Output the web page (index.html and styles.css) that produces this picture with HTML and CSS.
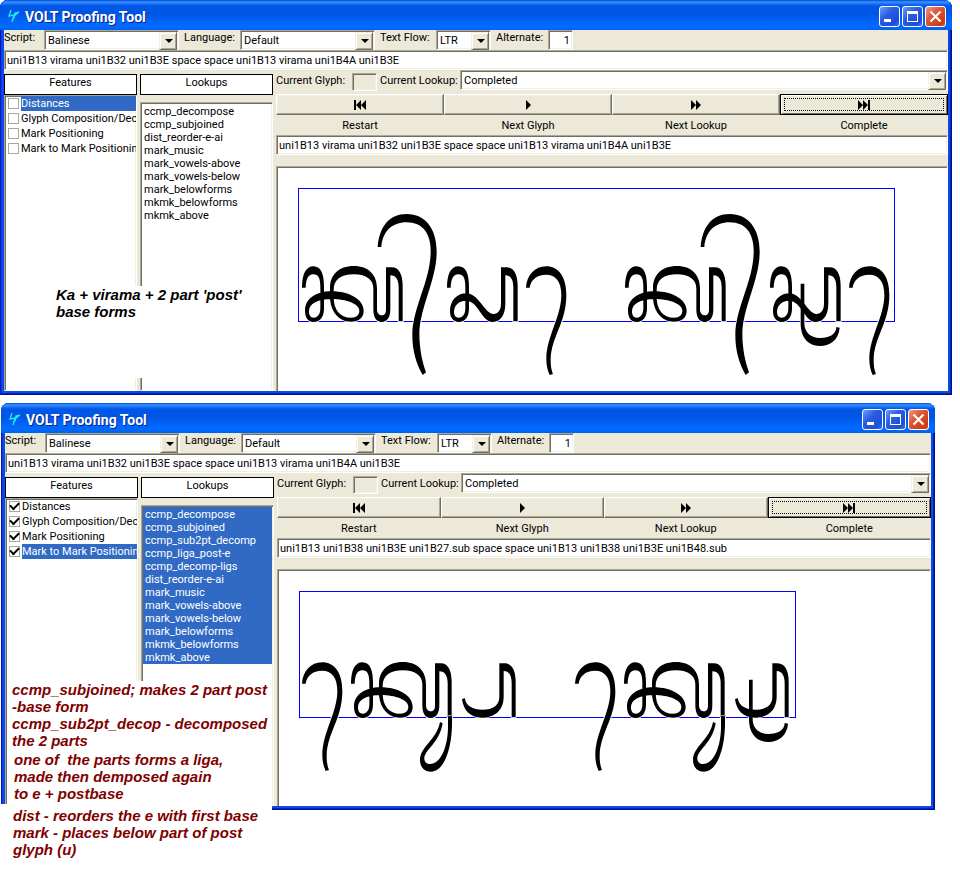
FILE: index.html
```html
<!DOCTYPE html>
<html lang="en">
<head>
<meta charset="utf-8">
<title>VOLT Proofing Tool</title>
<link rel="stylesheet" href="styles.css">
</head>
<body>
<svg class="defs" aria-hidden="true">
  <defs>
    <g id="ka"><path d="M36,323 C36,282 48,259 70,259 C94,259 102,284 102,322 L102,385 C102,410 91,426 71,426 C54,426 45,412 45,392 C45,358 75,334 125,334 C180,334 221,360 221,392 C221,412 207,425 183,425 C145,425 120,392 120,350 L120,325 C120,285 145,258 192,258 C236,258 261,285 261,325 L261,388 C261,400 268,406 276,406 C285,406 288,399 288,388 L288,262 L305,262 C328,262 338,285 338,318 L338,424 L326,424 L326,322 C326,300 318,286 301,286 L301,388 C301,412 292,426 275,426 C258,426 250,412 250,388 L250,325 C250,300 230,283 192,283 C152,283 131,300 131,330 L131,350 C131,390 150,413 183,413 C200,413 208,404 208,392 C208,372 170,357 125,357 C80,357 57,372 57,394 C57,406 62,413 71,413 C84,413 91,402 91,385 L91,322 C91,295 86,283 70,283 C54,283 48,298 47,323 Z"/></g>
    <g id="virama"><path d="M263,201 C268,140 298,102 350,102 C405,102 440,145 440,215 C440,300 390,380 388,460 C388,510 398,550 408,577 L398,585 C378,550 367,510 367,465 C367,385 422,300 422,215 C422,160 398,127 350,127 C305,127 278,155 274,201 Z"/></g>
    <g id="ma"><path d="M471,323 C471,282 483,259 505,259 C529,259 537,284 537,322 L537,385 C537,410 526,426 506,426 C489,426 480,412 480,394 C480,362 500,340 530,340 C565,340 585,402 610,402 C625,402 633,390 633,370 L633,262 L650,262 C673,262 683,285 683,318 L683,424 L670,424 L670,322 C670,300 663,286 646,286 L646,370 C646,405 632,426 608,426 C575,426 565,362 528,362 C505,362 492,378 492,396 C492,407 497,413 506,413 C519,413 526,402 526,385 L526,322 C526,295 521,283 505,283 C489,283 483,298 482,323 Z"/></g>
    <g id="hook"><path d="M708,323 C710,285 735,259 768,259 C806,259 829,290 829,345 C829,430 783,470 782,540 C782,560 785,572 789,582 L779,585 C772,570 769,555 769,538 C769,470 814,410 814,345 C814,305 798,284 768,284 C740,284 722,300 719,323 Z"/></g>
    <g id="below"><path d="M602,311 L613,311 L613,430 C613,455 630,474 660,474 C690,474 708,462 709,441 L719,443 C716,478 692,498 660,498 C622,498 602,470 602,430 Z"/></g>
    <g id="tail"><path d="M474,408 L486,408 L486,430 C486,500 465,575 422,575 C402,575 390,560 390,540 C390,500 440,480 450,426 L458,430 C448,490 403,510 403,535 C403,547 410,552 420,552 C452,552 474,500 474,440 Z"/></g>
    <g id="post"><path d="M516,358 L524,354 C528,378 548,389 577,389 C610,389 628,375 628,350 L628,250 L643,250 C668,250 677,275 677,305 L677,411 L665,411 L665,310 C665,288 658,273 641,273 L641,350 C641,390 615,413 575,413 C540,413 520,390 516,358 Z"/></g>
    <g id="line-one">
      <use href="#ka"/><use href="#virama"/><use href="#ma"/><use href="#hook"/>
      <use href="#ka" x="969"/><use href="#virama" x="969"/><use href="#ma" x="969"/><use href="#below" x="930"/><use href="#hook" x="969"/>
    </g>
    <g id="line-two">
      <use href="#hook" x="-672" y="-12"/><use href="#ka" x="147" y="-12"/><use href="#tail"/><use href="#post"/>
      <use href="#hook" x="147" y="-12"/><use href="#ka" x="966" y="-12"/><use href="#tail" x="819"/><use href="#post" x="819"/><use href="#below" x="775" y="-12"/>
    </g>
    <g id="bolt"><path d="M5 1 3 7 8 6 6 13M13 3 8 7 6 13M13 3 9 4 8 9" fill="none" stroke="#1fe6f5" stroke-width="1.4"/></g>
    <g id="i-restart"><path d="M0 0h2v10h-2zM7 0v10l-5-5zM12 0v10l-5-5z"/></g>
    <g id="i-next"><path d="M4 0l5 5-5 5z"/></g>
    <g id="i-forward"><path d="M1 0l5 5-5 5zM6 0l5 5-5 5z"/></g>
    <g id="i-complete"><path d="M0 0l5 5-5 5zM5 0l5 5-5 5zM10 0h2v10h-2z"/></g>
  </defs>
</svg>

<main class="page">
  <section class="shot shot-first">
    <div class="window">
      <header class="titlebar">
        <svg class="app-icon" viewBox="0 0 16 16"><use href="#bolt"/></svg>
        <h1 class="title">VOLT Proofing Tool</h1>
        <button class="sys" aria-label="Minimize"><svg viewBox="0 0 19 19"><path d="M4 12h7v3h-7z"/></svg></button>
        <button class="sys" aria-label="Maximize"><svg viewBox="0 0 19 19"><path fill-rule="evenodd" d="M4 4h11v11h-11zM5 7v7h9v-7z"/></svg></button>
        <button class="sys close" aria-label="Close"><svg viewBox="0 0 19 19"><path d="M4.500 4.500l10 10M14.500 4.500l-10 10" stroke="#fff" stroke-width="2.200"/></svg></button>
      </header>
      <div class="client">
        <div class="toolbar">
          <label class="lab-script" for="script1">Script:</label>
          <span class="combo wide"><select id="script1"><option>Balinese</option></select></span>
          <label class="lab" for="lang1">Language:</label>
          <span class="combo wide"><select id="lang1"><option>Default</option></select></span>
          <label class="lab" for="flow1">Text Flow:</label>
          <span class="combo narrow"><select id="flow1"><option>LTR</option></select></span>
          <label class="lab-alt" for="alt1">Alternate:</label>
          <input class="field alt" id="alt1" type="text" value="1">
        </div>
        <input class="field" type="text" aria-label="Input glyphs" value="uni1B13 virama uni1B32 uni1B3E space space uni1B13 virama uni1B4A uni1B3E">
        <div class="columns">
          <section class="side">
            <h2 class="head">Features</h2>
            <div class="list features">
              <label class="check"><input type="checkbox"><span class="sel">Distances</span></label>
              <label class="check"><input type="checkbox"><span>Glyph Composition/Dec</span></label>
              <label class="check"><input type="checkbox"><span>Mark Positioning</span></label>
              <label class="check"><input type="checkbox"><span>Mark to Mark Positioning</span></label>
            </div>
          </section>
          <section class="side">
            <h2 class="head">Lookups</h2>
            <ul class="list lookups">
              <li>ccmp_decompose</li><li>ccmp_subjoined</li><li>dist_reorder-e-ai</li><li>mark_music</li><li>mark_vowels-above</li><li>mark_vowels-below</li><li>mark_belowforms</li><li>mkmk_belowforms</li><li>mkmk_above</li>
            </ul>
          </section>
          <section class="work">
            <div class="current">
              <label class="lab-glyph" for="glyph1">Current Glyph:</label>
              <input class="field glyph" id="glyph1" type="text" readonly>
              <label class="lab-lookup" for="lookup1">Current Lookup:</label>
              <span class="combo fill"><select id="lookup1"><option>Completed</option></select></span>
            </div>
            <div class="steps">
              <div class="step"><button class="push" aria-labelledby="r1"><svg viewBox="0 0 12 10"><use href="#i-restart"/></svg></button><span id="r1">Restart</span></div>
              <div class="step"><button class="push" aria-labelledby="n1"><svg viewBox="0 0 12 10"><use href="#i-next"/></svg></button><span id="n1">Next Glyph</span></div>
              <div class="step"><button class="push" aria-labelledby="l1"><svg viewBox="0 0 12 10"><use href="#i-forward"/></svg></button><span id="l1">Next Lookup</span></div>
              <div class="step"><button class="push default" aria-labelledby="c1"><svg viewBox="0 0 12 10"><use href="#i-complete"/></svg></button><span id="c1">Complete</span></div>
            </div>
            <input class="field" type="text" aria-label="Output glyphs" value="uni1B13 virama uni1B32 uni1B3E space space uni1B13 virama uni1B4A uni1B3E">
            <div class="canvas">
              <svg class="proof" viewBox="0 0 1845 615" role="img" aria-label="Balinese proof">
                <rect class="frame" x="25" y="25" width="1788" height="399"/>
                <use class="halo" href="#line-one"/>
                <use href="#line-one"/>
              </svg>
            </div>
          </section>
        </div>
      </div>
    </div>
    <p class="note note-black">Ka + virama + 2 part 'post'<br>base forms</p>
  </section>

  <section class="shot shot-second">
    <div class="window">
      <header class="titlebar">
        <svg class="app-icon" viewBox="0 0 16 16"><use href="#bolt"/></svg>
        <h1 class="title">VOLT Proofing Tool</h1>
        <button class="sys" aria-label="Minimize"><svg viewBox="0 0 19 19"><path d="M4 12h7v3h-7z"/></svg></button>
        <button class="sys" aria-label="Maximize"><svg viewBox="0 0 19 19"><path fill-rule="evenodd" d="M4 4h11v11h-11zM5 7v7h9v-7z"/></svg></button>
        <button class="sys close" aria-label="Close"><svg viewBox="0 0 19 19"><path d="M4.500 4.500l10 10M14.500 4.500l-10 10" stroke="#fff" stroke-width="2.200"/></svg></button>
      </header>
      <div class="client">
        <div class="toolbar">
          <label class="lab-script" for="script2">Script:</label>
          <span class="combo wide"><select id="script2"><option>Balinese</option></select></span>
          <label class="lab" for="lang2">Language:</label>
          <span class="combo wide"><select id="lang2"><option>Default</option></select></span>
          <label class="lab" for="flow2">Text Flow:</label>
          <span class="combo narrow"><select id="flow2"><option>LTR</option></select></span>
          <label class="lab-alt" for="alt2">Alternate:</label>
          <input class="field alt" id="alt2" type="text" value="1">
        </div>
        <input class="field" type="text" aria-label="Input glyphs" value="uni1B13 virama uni1B32 uni1B3E space space uni1B13 virama uni1B4A uni1B3E">
        <div class="columns">
          <section class="side">
            <h2 class="head">Features</h2>
            <div class="list features">
              <label class="check"><input type="checkbox" checked><span>Distances</span></label>
              <label class="check"><input type="checkbox" checked><span>Glyph Composition/Dec</span></label>
              <label class="check"><input type="checkbox" checked><span>Mark Positioning</span></label>
              <label class="check"><input type="checkbox" checked><span class="sel">Mark to Mark Positioning</span></label>
            </div>
          </section>
          <section class="side">
            <h2 class="head">Lookups</h2>
            <ul class="list lookups all">
              <li>ccmp_decompose</li><li>ccmp_subjoined</li><li>ccmp_sub2pt_decomp</li><li>ccmp_liga_post-e</li><li>ccmp_decomp-ligs</li><li>dist_reorder-e-ai</li><li>mark_music</li><li>mark_vowels-above</li><li>mark_vowels-below</li><li>mark_belowforms</li><li>mkmk_belowforms</li><li>mkmk_above</li>
            </ul>
          </section>
          <section class="work">
            <div class="current">
              <label class="lab-glyph" for="glyph2">Current Glyph:</label>
              <input class="field glyph" id="glyph2" type="text" readonly>
              <label class="lab-lookup" for="lookup2">Current Lookup:</label>
              <span class="combo fill"><select id="lookup2"><option>Completed</option></select></span>
            </div>
            <div class="steps">
              <div class="step"><button class="push" aria-labelledby="r2"><svg viewBox="0 0 12 10"><use href="#i-restart"/></svg></button><span id="r2">Restart</span></div>
              <div class="step"><button class="push" aria-labelledby="n2"><svg viewBox="0 0 12 10"><use href="#i-next"/></svg></button><span id="n2">Next Glyph</span></div>
              <div class="step"><button class="push" aria-labelledby="l2"><svg viewBox="0 0 12 10"><use href="#i-forward"/></svg></button><span id="l2">Next Lookup</span></div>
              <div class="step"><button class="push default" aria-labelledby="c2"><svg viewBox="0 0 12 10"><use href="#i-complete"/></svg></button><span id="c2">Complete</span></div>
            </div>
            <input class="field" type="text" aria-label="Output glyphs" value="uni1B13 uni1B38 uni1B3E uni1B27.sub space space uni1B13 uni1B38 uni1B3E uni1B48.sub">
            <div class="canvas tall">
              <svg class="proof" viewBox="3 9 1845 615" role="img" aria-label="Balinese proof">
                <rect class="frame" x="29" y="34" width="1488" height="378"/>
                <use class="halo" href="#line-two"/>
                <use href="#line-two"/>
                <path class="seam" d="M472,407h17M1291,407h17"/>
              </svg>
            </div>
          </section>
        </div>
      </div>
    </div>
    <div class="note note-red note-upper">
      <p>ccmp_subjoined; makes 2 part post<br>-base form<br>ccmp_sub2pt_decop - decomposed<br>the 2 parts</p>
      <p>one of&nbsp; the parts forms a liga,<br>made then demposed again<br>to e + postbase</p>
    </div>
    <p class="note note-red note-lower">dist - reorders the e with first base<br>mark - places below part of post<br>glyph (u)</p>
  </section>
</main>
</body>
</html>
```
FILE: styles.css
```css
* { box-sizing: border-box; }

body {
  margin: 0;
  background: #fff;
  color: #000;
  font: 11px/13px Roboto, "Liberation Sans", sans-serif;
}

h1, h2, p, ul { margin: 0; padding: 0; list-style: none; }

input, select, button {
  margin: 0;
  font: inherit;
  color: inherit;
  border-radius: 0;
  appearance: none;
}

.defs { position: absolute; width: 0; height: 0; }

.page {
  display: flex;
  flex-direction: column;
  gap: 8px;
  padding-bottom: 63px;
}

.shot { position: relative; }
.shot-first { margin-right: 8px; }
.shot-second { margin: 0 25px 0 1px; }

.window {
  padding: 0 4px 4px;
  border-radius: 8px 8px 0 0;
  background: #0a4ae8;
  box-shadow:
    inset 1px 0 #0017c8,
    inset -1px -1px #00138c,
    inset 2px 0 #0a3fe0,
    inset -2px -2px #0026b8;
}

.titlebar {
  display: flex;
  align-items: center;
  gap: 2px;
  height: 30px;
  margin: 0 -4px;
  padding: 3px 6px 0;
  border-radius: 8px 8px 0 0;
  background: linear-gradient(#0049d8 0, #3a93ff 2px, #1670f5 4px, #0057e6 6px, #0055e5 14px, #0066fa 22px, #006aff 26px, #0060f0 30px);
  color: #fff;
}

.app-icon { width: 16px; height: 16px; }

.title {
  flex: 1;
  padding-left: 1px;
  font: bold 14px/16px Roboto, "Noto Sans", sans-serif;
  text-shadow: 1px 1px #0a1f8c;
}

.sys {
  width: 21px;
  height: 21px;
  padding: 0;
  border: 1px solid #fff;
  border-radius: 3px;
  background: linear-gradient(135deg, #6d9bf8, #2a5ce0 40%, #1c4fd8 80%, #3a70f0);
}
.sys svg { display: block; width: 19px; height: 19px; fill: #fff; }
.close { background: linear-gradient(135deg, #f09a80, #e0553a 40%, #cc3a10 85%, #e05a30); }

.client { background: #ece9d8; }

.toolbar { display: flex; height: 20px; }
.toolbar label { line-height: 15px; white-space: nowrap; }
.lab-script { width: 40px; }
.lab { width: 61px; padding-left: 5px; }
.lab-alt { width: 57px; padding-left: 5px; }

.field, .combo {
  height: 20px;
  border: 1px solid;
  border-color: #aca899 #fff #fff #aca899;
  box-shadow: inset 1px 1px #716f64, inset -1px -1px #f1efe2;
  background: #fff;
}
.field { display: block; width: 100%; padding: 0 2px; }
.field.alt { width: 25px; text-align: right; }

.combo { display: flex; position: relative; }
.combo select {
  flex: 1;
  min-width: 0;
  padding: 1px 3px 0;
  border: 0;
  background: transparent;
}
.combo::before {
  content: "";
  position: absolute;
  top: 1px;
  right: 1px;
  width: 16px;
  height: 16px;
  border: 1px solid;
  border-color: #f1efe2 #716f64 #716f64 #f1efe2;
  box-shadow: inset 1px 1px #fff, inset -1px -1px #aca899;
  background: #ece9d8;
}
.combo::after {
  content: "";
  position: absolute;
  top: 8px;
  right: 5px;
  border: 4px solid transparent;
  border-top-color: #000;
  border-bottom: 0;
  pointer-events: none;
}
.combo select { position: relative; z-index: 1; }
.wide { width: 135px; }
.narrow { width: 55px; }
.fill { flex: 1; }

.columns {
  display: grid;
  grid-template-columns: 133px 133px minmax(0, 1fr);
  gap: 3px;
}

.side { display: flex; flex-direction: column; padding-top: 4px; min-width: 0; }

.head {
  height: 21px;
  border: 1px solid #000;
  background: #fff;
  font: inherit;
  line-height: 15px;
  text-align: center;
}

.list {
  flex: 1;
  border: 1px solid;
  border-color: #aca899 #fff transparent #aca899;
  box-shadow: inset 1px 1px #716f64, inset -1px 0 #f1efe2;
  background: #fff;
}

.features { padding: 0 0 0 3px; overflow: hidden; }

.check { display: flex; align-items: center; gap: 2px; height: 15px; }
.check input {
  flex: none;
  display: grid;
  place-items: center;
  width: 11px;
  height: 11px;
  border: 1px solid #aca899;
  background: #fff;
}
.check input:checked::before {
  content: "";
  width: 7px;
  height: 4px;
  margin-top: -3px;
  border: solid #000;
  border-width: 0 0 2px 2px;
  transform: rotate(-45deg);
}
.check span {
  flex: 1;
  min-width: 0;
  line-height: 15px;
  white-space: nowrap;
  overflow: hidden;
}
.sel { background: #316ac5; color: #fff; }

.lookups { margin-top: 7px; padding: 1px; }
.lookups li { padding-left: 2px; line-height: 13px; }
.lookups li:first-child { padding-top: 1px; }
.all li { background: #316ac5; color: #fff; }

.work { min-width: 0; }

.current { display: flex; height: 20px; }
.current label { line-height: 22px; white-space: nowrap; }
.lab-glyph { width: 76px; }
.lab-lookup { width: 83px; padding-left: 3px; }
.field.glyph { width: 25px; height: 18px; margin-top: 3px; background: #ece9d8; }

.steps { display: grid; grid-template-columns: repeat(4, 1fr); margin-top: 4px; }
.step { display: flex; flex-direction: column; height: 41px; text-align: center; }
.step span { line-height: 22px; }

.push {
  flex: none;
  display: flex;
  align-items: center;
  justify-content: center;
  height: 21px;
  padding: 1px 0 0;
  border: 1px solid;
  border-color: #fff #716f64 #716f64 #fff;
  box-shadow: inset -1px -1px #aca899, inset 1px 1px #f1efe2;
  background: #ece9d8;
}
.push svg { width: 12px; height: 10px; }
.push.default {
  border-color: #000;
  box-shadow: inset 1px 1px #fff, inset -1px -1px #716f64;
  outline: 1px dotted #000;
  outline-offset: -5px;
}

.canvas {
  margin-top: 11px;
  padding: 13px 10px 6px 13px;
  border: 1px solid;
  border-color: #aca899 #fff transparent #aca899;
  border-bottom: 0;
  box-shadow: inset 1px 1px #716f64;
  background: #fff;
}
.canvas.tall { padding-bottom: 18px; }

.proof { display: block; width: 615px; max-width: 100%; }
.frame { fill: none; stroke: #00f; stroke-width: 3; shape-rendering: crispEdges; }
.halo { stroke: #fff; stroke-width: 5; }
.seam { stroke: #aaa; stroke-width: 3; }

.note {
  position: absolute;
  background: #fff;
  font: italic bold 15px/17px "Liberation Sans", Arial, sans-serif;
  white-space: nowrap;
}
.note-black { left: 50px; top: 286px; width: 200px; height: 92px; padding-left: 6px; }
.note-red { color: #800000; }
.note-upper { left: 6px; top: 278px; width: 265px; height: 123px; padding-left: 5px; }
.note-upper p + p { margin-top: 2px; padding-left: 2px; }
.note-lower { left: -1px; top: 401px; width: 272px; height: 69px; padding: 3px 0 0 13px; }
```
